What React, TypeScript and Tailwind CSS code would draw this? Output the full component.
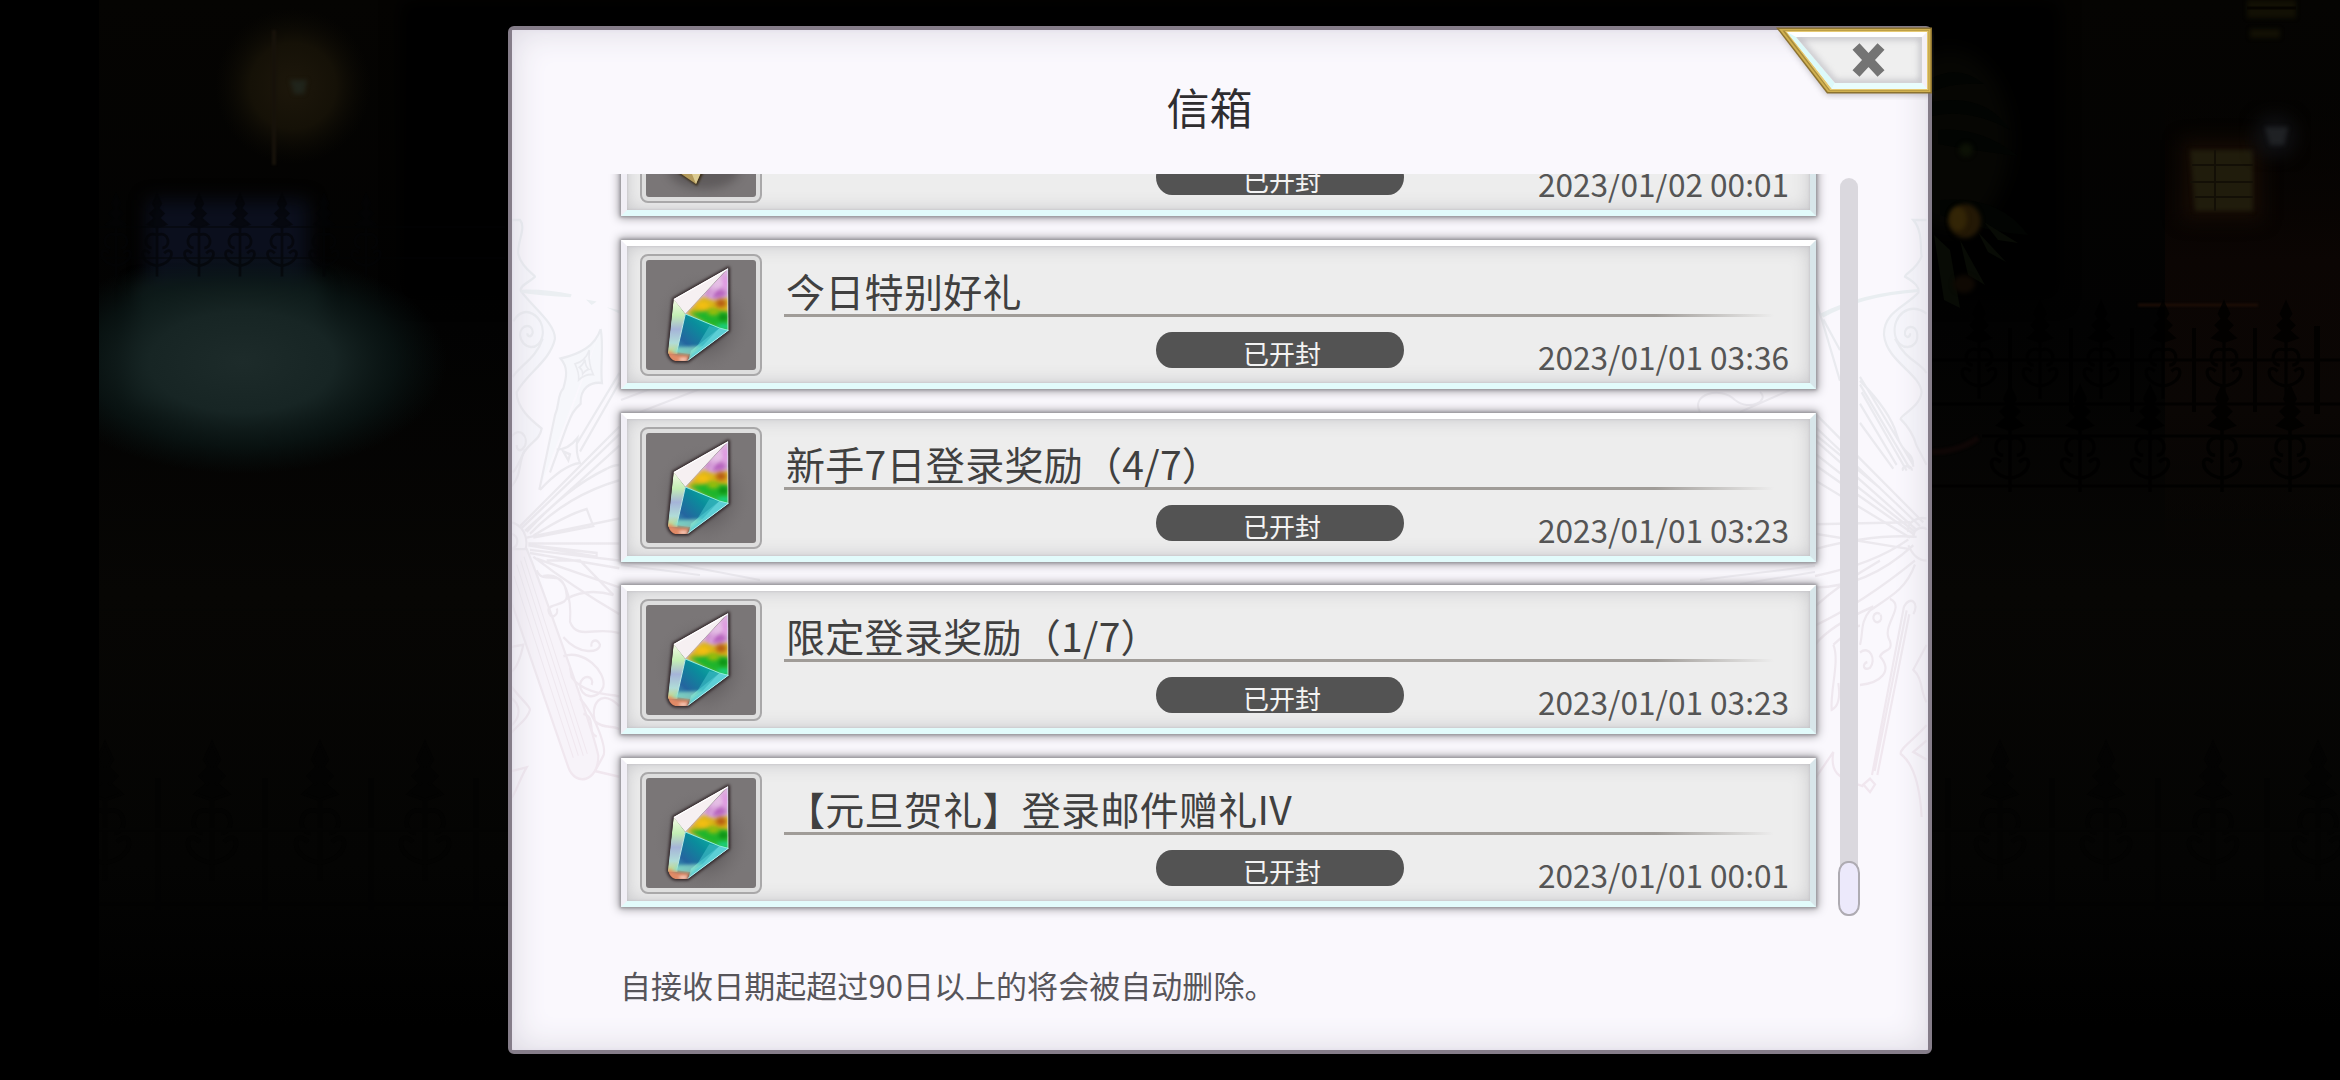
import React from 'react';

interface Mail {
  id: number;
  title: string;
  date: string;
  reward: 'gem' | 'gold';
}

const mails: Mail[] = [
  { id: 1, title: '', date: '2023/01/02 00:01', reward: 'gold' },
  { id: 2, title: '今日特别好礼', date: '2023/01/01 03:36', reward: 'gem' },
  { id: 3, title: '新手7日登录奖励（4/7）', date: '2023/01/01 03:23', reward: 'gem' },
  { id: 4, title: '限定登录奖励（1/7）', date: '2023/01/01 03:23', reward: 'gem' },
  { id: 5, title: '【元旦贺礼】登录邮件赠礼IV', date: '2023/01/01 00:01', reward: 'gem' },
];

function Finial({ x, y, s = 1 }: { x: number; y: number; s?: number }) {
  return (
    <g transform={`translate(${x} ${y}) scale(${s})`}>
      <path d="M0 -38 L5 -27 L2 -22 L8 -16 L3 -11 L11 -4 L0 0 L-11 -4 L-3 -11 L-8 -16 L-2 -22 L-5 -27 Z" />
      <path d="M0 0V54M0 8C14 2 16 22 6 22M0 8C-14 2 -16 22 -6 22M0 42C22 38 18 18 8 28M0 42C-22 38 -18 18 -8 28" fill="none" strokeWidth="3" />
    </g>
  );
}

function Scene() {
  return (
    <svg className="absolute inset-0 h-full w-full" viewBox="0 0 2340 1080" preserveAspectRatio="none">
      <defs>
        <linearGradient id="ground" x1="0" y1="0" x2="0" y2="1">
          <stop offset="0" stopColor="#050402" />
          <stop offset="0.3" stopColor="#020202" />
          <stop offset="0.55" stopColor="#070604" />
          <stop offset="0.8" stopColor="#040403" />
          <stop offset="0.95" stopColor="#000" />
        </linearGradient>
        <radialGradient id="lamp">
          <stop offset="0" stopColor="#1d170b" />
          <stop offset="0.55" stopColor="#151107" />
          <stop offset="1" stopColor="#0c0a04" stopOpacity="0" />
        </radialGradient>
        <radialGradient id="pool">
          <stop offset="0" stopColor="#1d2b2a" />
          <stop offset="0.45" stopColor="#172524" />
          <stop offset="0.75" stopColor="#0b1817" stopOpacity="0.7" />
          <stop offset="1" stopColor="#081413" stopOpacity="0" />
        </radialGradient>
        <linearGradient id="house" x1="0" y1="0" x2="0" y2="1">
          <stop offset="0" stopColor="#040200" stopOpacity="0" />
          <stop offset="0.4" stopColor="#0b0503" />
          <stop offset="0.7" stopColor="#0a0604" />
          <stop offset="1" stopColor="#0a0604" stopOpacity="0" />
        </linearGradient>
        <filter id="soft" colorInterpolationFilters="sRGB" x="-40%" y="-40%" width="180%" height="180%">
          <feGaussianBlur stdDeviation="9" />
        </filter>
        <filter id="soft2" colorInterpolationFilters="sRGB" x="-40%" y="-40%" width="180%" height="180%">
          <feGaussianBlur stdDeviation="2" />
        </filter>
      </defs>
      <rect x="99" width="2241" height="1080" fill="url(#ground)" />
      <rect x="400" width="1660" height="300" fill="#000" filter="url(#soft)" />
      <circle cx="293" cy="86" r="78" fill="url(#lamp)" />
      <path d="M274 30V165" stroke="#17120a" strokeWidth="4" filter="blur(1px)" />
      <path d="M290 80H307L304 94H294Z" fill="#20241b" filter="url(#soft2)" />
      <svg x="99" y="0" width="360" height="600" viewBox="99 0 360 600">
        <path d="M148 200H308V300H148Z" fill="#0b0f1d" filter="url(#soft)" />
        <path d="M136 285H322V400H136Z" fill="#14201f" filter="url(#soft)" />
        <ellipse cx="242" cy="362" rx="205" ry="112" fill="url(#pool)" />
      </svg>
      <g fill="#030406" stroke="#030406" strokeWidth="1.5" opacity="0.6">
        {[116, 157, 199, 240, 282, 324, 366].map((x) => (
          <Finial key={x} x={x} y={228} s={0.9} />
        ))}
        <path d="M99 227H505M99 258H505" />
      </g>

      {/* house and its lit windows */}
      <path d="M2165 60H2340V560H2165Z" fill="url(#house)" />
      <path d="M2182 140H2262V220H2182Z" fill="#150b04" filter="url(#soft)" />
      <path d="M2190 150H2253V211H2195Z" fill="#201c0c" filter="url(#soft2)" />
      <path d="M2215 150V211M2190 182H2253M2192 165H2253M2195 197H2253" stroke="#130f06" strokeWidth="2" />
      <path d="M2247 0H2296V18H2247ZM2250 29H2280V38H2250Z" fill="#121004" filter="url(#soft2)" />
      <path d="M2247 8H2296" stroke="#060400" strokeWidth="3" />
      <circle cx="2275" cy="136" r="20" fill="#101114" filter="url(#soft)" />
      <path d="M2265 127H2288L2284 145H2270Z" fill="#1f2124" filter="url(#soft2)" />
      <path d="M2138 305H2258" stroke="#1d0d06" strokeWidth="3" filter="blur(1px)" />

      {/* fruit tree */}
      <ellipse cx="1950" cy="140" rx="60" ry="90" fill="#060603" filter="url(#soft)" />
      <g fill="#020402">
        <path d="M1932 78Q1960 64 1984 84Q1950 82 1932 92ZM1932 102Q1985 92 2010 130Q1970 108 1932 116Z" />
        <path d="M1938 130Q1980 126 2018 156Q1970 150 1938 144ZM1940 200Q2000 195 2028 235Q1985 232 1940 215Z" />
      </g>
      <g fill="#080b05">
        <path d="M1984 222L2018 243L1998 240ZM1978 232L2006 262L1988 252ZM1934 235L1944 300L1960 308L1950 250ZM1960 240L1985 285L1968 275Z" />
      </g>
      <circle cx="1966" cy="150" r="7" fill="#0c1105" filter="url(#soft2)" />
      <ellipse cx="1965" cy="221" rx="16" ry="17" fill="#231805" filter="url(#soft2)" />
      <ellipse cx="1958" cy="219" rx="9" ry="12" fill="#332506" filter="url(#soft2)" />
      <ellipse cx="1964" cy="284" rx="11" ry="9" fill="#0f0903" filter="url(#soft2)" />
      <path d="M1932 452Q1958 452 1978 438" stroke="#0e0605" strokeWidth="6" fill="none" filter="blur(1px)" />

      {/* wrought iron fences */}
      <g fill="#010101" stroke="#010101" strokeWidth="2" opacity="0.8">
        {[1979, 2040, 2101, 2163, 2224, 2286].map((x) => (
          <Finial key={x} x={x} y={342} s={1.05} />
        ))}
        {[2010, 2071, 2132, 2194, 2255].map((x) => (
          <path key={x} d={`M${x} 328V412`} strokeWidth="4" />
        ))}
        <path d="M2317 326V414" strokeWidth="6" />
        <path d="M1932 360H2340M1932 404H2340" strokeWidth="3" />
        {[2010, 2080, 2150, 2222, 2290].map((x) => (
          <Finial key={x} x={x} y={430} s={1.15} />
        ))}
        <path d="M1982 436H2340M1932 486H2340" strokeWidth="3" />
      </g>
      <g fill="#020202" stroke="#020202" strokeWidth="2" opacity="0.5">
        {[105, 212, 320, 425, 2000, 2106, 2213, 2318].map((x) => (
          <Finial key={x} x={x} y={800} s={1.5} />
        ))}
        {[158, 265, 371, 476, 1948, 2052, 2158, 2267].map((x) => (
          <path key={x} d={`M${x} 778V910`} strokeWidth="6" />
        ))}
        <path d="M99 830H508M1932 830H2340M99 904H508M1932 904H2340" strokeWidth="3" />
      </g>
      <g stroke="#090806" strokeWidth="1" fill="none" opacity="0.6">
        <path d="M99 520H508M99 565H508M99 610H508M99 655H508M99 700H508M99 829H508" />
        <path d="M1932 520H2340M1932 565H2340M1932 610H2340M1932 655H2340M1932 700H2340M1932 829H2340" />
      </g>
      <rect width="99" height="1080" fill="#000" />
    </svg>
  );
}

function Ornaments() {
  return (
    <svg className="pointer-events-none absolute inset-0 h-full w-full" viewBox="512 30 1416 1020" fill="none">
      <defs>
        <linearGradient id="tint" gradientUnits="userSpaceOnUse" x1="0" y1="0" x2="0" y2="1500">
          <stop offset="0" stopColor="#e8ecf0" />
          <stop offset="0.5" stopColor="#ebe9ee" />
          <stop offset="1" stopColor="#f1e7ef" />
        </linearGradient>
      </defs>
      <g transform="translate(500 220) scale(.3333 .3827)" stroke="url(#tint)" strokeWidth="6.5">
        <path d="M35 0H60C80 20 50 60 55 90C65 125 105 145 105 148C85 165 60 170 62 185C100 230 165 270 165 310C150 370 80 400 50 450C50 490 90 520 125 545C120 575 90 580 70 610C55 640 65 670 30 700Z" fill="#f6f6fb" />
        <path d="M62 182Q140 180 215 194L212 202Q130 198 62 190ZM258 208L290 213L275 222ZM320 228L358 236L358 244Z" fill="#ebeff2" stroke="none" />
        <path d="M40 265C70 215 135 250 128 300C120 345 65 340 60 300C62 270 100 270 98 295C94 308 82 305 82 296M128 310C110 360 60 380 38 410" />
        <path d="M35 565C60 540 85 565 75 590C60 610 50 600 50 588M75 600C60 630 50 650 38 660" />
        <path d="M302 285C285 330 240 350 182 362C205 385 200 410 190 440C170 460 180 480 165 510L118 705M302 285C312 330 300 380 306 426C270 422 240 440 242 480C215 500 210 520 200 540L150 660" fill="#f6f7fb" />
        <path d="M268 340Q255 370 225 376Q238 400 236 418Q255 402 280 404Q264 375 268 340ZM255 365Q248 380 238 385Q248 392 248 402Q256 392 266 390Q256 382 255 365Z" strokeWidth="5" />
        <path d="M358 400L230 585M358 425L240 605M170 600Q205 600 232 570Q226 610 240 635Q190 640 120 705M190 605L210 612L205 628Z" />
        <path d="M60 800L358 540M65 805L358 560M75 812L358 590M80 815Q200 700 320 650Q340 640 358 640M90 820Q200 720 358 680M100 825Q200 770 260 755L280 800L100 830" />
        <path d="M80 830L358 780M85 845L358 845M85 850L290 880V870L90 850M90 862L358 890M90 870L358 910M100 880Q220 960 358 1030M140 890L240 890L340 980Q260 960 200 990M110 885L358 960" />
        <path d="M35 790C60 795 85 820 78 855C70 880 50 885 35 880M35 820C55 825 60 850 35 860" />
        <path d="M80 860C100 900 270 1300 295 1400C295 1470 225 1480 205 1430L35 1000V860Z" fill="#f7f3f9" />
        <path d="M50 900L235 1400M62 890L250 1400M72 880L262 1395M42 930L220 1405" strokeWidth="3" />
        <path d="M110 915C130 960 190 900 200 980C205 1010 145 1000 145 1020C150 1050 180 1030 170 1015M130 930C200 920 215 990 210 1050C230 1100 290 1060 358 1080M190 1090C240 1140 300 1130 300 1110C290 1090 270 1100 275 1115" />
        <path d="M190 1140C250 1120 320 1180 310 1220C290 1260 240 1245 240 1215C245 1185 285 1190 275 1215M210 1170L215 1195C250 1240 340 1240 358 1245M358 1270C300 1220 270 1270 285 1310C310 1330 330 1320 358 1330M240 1250C290 1300 320 1380 310 1400L285 1440L358 1455M250 1290C290 1300 260 1340 290 1350" />
        <path d="M35 1115L70 1110C60 1150 50 1170 35 1180M35 1220C60 1250 90 1270 90 1280C80 1310 50 1320 35 1340M35 1250C65 1270 60 1300 35 1320M35 1440L80 1430C60 1460 50 1490 35 1510" />
      </g>
      <g transform="translate(1780 220) scale(.3333 .3827)" stroke="url(#tint)" strokeWidth="6.5">
        <path d="M440 0H400C430 30 420 80 425 95C410 130 375 140 375 148C400 160 420 175 415 190C380 225 310 240 312 300C320 370 420 400 425 450C420 490 360 510 362 520C385 540 400 560 410 590L440 640" fill="#f6f6fb" />
        <path d="M120 245Q240 190 415 180V188Q240 200 130 255Z" fill="#e9eef1" stroke="none" />
        <path d="M440 245C390 210 335 250 345 300C355 345 415 340 412 300C410 270 370 275 375 300C380 310 392 305 390 296M345 310C380 370 420 370 440 400" />
        <path d="M105 200L180 420M130 260L180 340M240 410L400 640M240 430L390 650M245 450L380 655M240 480L350 640M240 420Q330 500 350 560C370 620 400 600 400 645M240 530L340 650" />
        <path d="M105 505L430 790M105 540L420 800M105 575L410 810M105 610L405 815M105 640L400 820M105 680L390 830M105 560L300 700M370 655C360 640 400 640 395 655" />
        <path d="M105 795L390 790M105 820L390 860M105 860Q280 820 410 828M105 930Q280 900 385 835M105 960Q260 960 400 850M105 1010Q180 950 300 890M105 1060Q250 1000 405 890M105 1110Q150 1060 280 1010" />
        <path d="M385 815C380 790 410 775 440 780M400 830C400 800 440 800 440 810M385 850C400 880 420 890 440 890" />
        <path d="M405 900C380 960 340 980 270 1020C240 1050 250 1080 240 1110M330 990C380 1010 300 1060 330 1100C340 1130 310 1120 300 1140C340 1180 300 1210 240 1215M240 1130C270 1110 290 1150 270 1170C250 1180 245 1160 262 1155M300 1030A12 12 0 1 0 301 1031M160 1110C180 1150 150 1230 155 1280C180 1270 180 1240 175 1210M160 1110C200 1080 220 1060 240 1060" />
        <path d="M372 1010L276 1450M388 1030L292 1450M380 1020L284 1440M250 1475L270 1460L285 1475L270 1495ZM105 1460L160 1390C150 1440 170 1460 250 1480M372 1010C390 980 420 1000 400 1030" />
        <path d="M440 1110L400 1175C430 1200 420 1230 440 1260M440 1320C400 1360 360 1380 362 1395C400 1420 420 1480 425 1560M440 1360L400 1390L440 1410" />
      </g>
      <g stroke="#eceaf0" strokeWidth="2">
        <path d="M621 400L650 389M640 412L700 389M1700 412C1690 395 1720 385 1735 400C1750 412 1770 400 1760 392M1740 412L1790 390" />
        <path d="M621 565L700 575M660 561L760 580M1700 580L1815 566M1740 584L1815 572" />
      </g>
    </svg>
  );
}

function GemIcon() {
  return (
    <svg className="h-[110px] w-[110px]" viewBox="20 28 330 330">
      <defs>
        <clipPath id="gemShape">
          <path d="M267 52L103 145L86 305Q92 328 108 331L145 331L268 240Z" />
        </clipPath>
        <clipPath id="gemFacet">
          <path d="M267 52L138 190L240 232L268 240Z" />
        </clipPath>
        <radialGradient id="gemBack">
          <stop offset="0.3" stopColor="#4f4b4d" />
          <stop offset="1" stopColor="#7a7677" stopOpacity="0" />
        </radialGradient>
        <linearGradient id="gemLeft" x1="0" y1="0" x2="0" y2="1">
          <stop offset="0" stopColor="#f6fbe8" />
          <stop offset="0.3" stopColor="#c3eeb4" />
          <stop offset="0.55" stopColor="#a5b4d8" />
          <stop offset="0.8" stopColor="#b0dcd8" />
          <stop offset="1" stopColor="#cfd678" />
        </linearGradient>
        <linearGradient id="gemTeal" x1="1" y1="0" x2="0" y2="1">
          <stop offset="0" stopColor="#10c0a0" />
          <stop offset="0.4" stopColor="#0a8d9c" />
          <stop offset="0.75" stopColor="#24659f" />
          <stop offset="1" stopColor="#48a8b8" />
        </linearGradient>
        <filter id="gemBlur" colorInterpolationFilters="sRGB" x="-60%" y="-60%" width="220%" height="220%">
          <feGaussianBlur stdDeviation="6" />
        </filter>
        <filter id="gemEdge" colorInterpolationFilters="sRGB" x="-30%" y="-60%" width="160%" height="220%">
          <feGaussianBlur stdDeviation="4" />
        </filter>
      </defs>
      <rect x="20" y="28" width="330" height="330" fill="#7a7677" />
      <ellipse cx="190" cy="215" rx="150" ry="160" fill="url(#gemBack)" opacity="0.8" />
      <path d="M267 52L103 145L86 305Q92 328 108 331L145 331L268 240Z" fill="#2c2023" stroke="#2c2023" strokeWidth="9" strokeLinejoin="round" filter="url(#gemEdge)" />
      <g clipPath="url(#gemShape)">
        <path d="M267 52L138 190L240 232L268 240Z" fill="#dcb4dc" />
        <g clipPath="url(#gemFacet)">
          <path d="M138 190L190 138L230 150L270 140V245Z" fill="#d9b416" filter="url(#gemBlur)" />
          <path d="M150 186L215 178L270 185V250L200 220Z" fill="#1fb52c" filter="url(#gemBlur)" />
          <g filter="url(#gemBlur)">
            <ellipse cx="232" cy="128" rx="30" ry="14" fill="#b764be" />
            <ellipse cx="258" cy="95" rx="12" ry="24" fill="#e09be2" />
            <ellipse cx="190" cy="164" rx="20" ry="11" fill="#f4bf12" />
            <ellipse cx="245" cy="158" rx="16" ry="12" fill="#b55a14" />
            <ellipse cx="222" cy="184" rx="18" ry="10" fill="#9fbd08" />
            <ellipse cx="252" cy="200" rx="14" ry="10" fill="#0c8f14" />
            <ellipse cx="255" cy="228" rx="24" ry="8" fill="#1ad48e" />
          </g>
          <path d="M240 70L205 130L215 145L250 100Z" fill="#eecbee" opacity="0.5" filter="url(#gemEdge)" />
        </g>
        <path d="M270 48L100 143L138 190Z" fill="#f6f0f2" />
        <path d="M103 145L138 190L114 310H84Z" fill="url(#gemLeft)" />
        <path d="M138 190L240 232L165 312L112 305Z" fill="url(#gemTeal)" />
        <path d="M240 232L270 238L145 335L155 300Z" fill="#5ccfd6" />
        <path d="M190 285L240 232L210 226L165 300Z" fill="#3bb5c0" opacity="0.7" />
        <path d="M138 190L240 232L270 240" stroke="#8df0dc" strokeWidth="3" fill="none" />
        <path d="M138 190L112 305" stroke="#b9e9e6" strokeWidth="3" />
        <path d="M110 290L190 285L150 318L95 312Z" fill="#8fdfc6" opacity="0.75" filter="url(#gemEdge)" />
        <path d="M84 300L112 310L152 312L140 338H84Z" fill="#e08a66" filter="url(#gemEdge)" />
        <ellipse cx="132" cy="326" rx="14" ry="5" fill="#f7d2c6" filter="url(#gemEdge)" />
        <path d="M267 54L104 146" stroke="#fff" strokeWidth="4" />
        <path d="M266 54V240L145 330" stroke="#d7fbfb" strokeWidth="3" fill="none" opacity="0.8" />
      </g>
    </svg>
  );
}

function GoldIcon() {
  return (
    <svg className="h-[110px] w-[110px]" viewBox="0 0 110 110">
      <rect width="110" height="110" fill="#7a7677" />
      <ellipse cx="58" cy="82" rx="36" ry="20" fill="#4a4647" opacity="0.55" filter="blur(5px)" />
      <path d="M20 78L51 99L62 76Z" fill="#3a2d18" filter="blur(1px)" />
      <path d="M22 78L50 97L59 76Z" fill="#b39a5c" />
      <path d="M44 82L50 97L59 76Z" fill="#dccb92" />
    </svg>
  );
}

function MailCard({ mail }: { mail: Mail }) {
  return (
    <div className="flex h-[149px] w-[1195px] shrink-0 border-6 border-t-white border-r-[#d8e6ea] border-b-[#e2fbfb] border-l-[#f1eff6] bg-[#ededed] pt-[8px] pr-[21px] pl-[13px] shadow-[0_0_3px_1px_#929095,0_0_9px_2px_#9e9ca1,inset_0_0_3px_#bdbcc0,inset_0_0_18px_#c6c6c9]">
      <div className="flex h-[122px] w-[122px] shrink-0 items-center justify-center rounded-[8px] border-2 border-[#a9a8a9] bg-[#dedede]">
        <div className="overflow-hidden rounded-[3px]">
          {mail.reward === 'gem' ? <GemIcon /> : <GoldIcon />}
        </div>
      </div>
      <div className="ml-[22px] flex flex-1 flex-col">
        <div className="h-[60px] pt-[17px] pl-[2px] text-[39px] leading-[39px] tracking-[0.3px] whitespace-nowrap text-[#404040]">{mail.title}</div>
        <div className="h-[3px] w-[990px] bg-linear-to-r from-[#a09c98] from-88% to-[#a09c98]/0" />
        <div className="mt-[15px] flex">
          <div className="ml-[372px] h-[36px] w-[248px] rounded-[16px/18px] bg-[#535353] pt-[8px] pl-[4px] text-center text-[26px] leading-[26px] text-[#f4f4f4]">
            已开封
          </div>
          <div className="mt-[9px] ml-auto text-[31.6px] leading-[31px] whitespace-nowrap text-[#555]">{mail.date}</div>
        </div>
      </div>
    </div>
  );
}

function CloseButton() {
  return (
    <button aria-label="close" className="absolute -top-[6px] -right-[6px] h-[76px] w-[164px]">
      <svg className="h-full w-full" viewBox="1770 24 164 76" fill="none">
        <defs>
          <filter id="panelEdge" colorInterpolationFilters="sRGB"><feGaussianBlur stdDeviation="3" /></filter>
          <clipPath id="panelClip"><path d="M1796 37H1922V83H1835Z" /></clipPath>
        </defs>
        <path d="M1780 32H1931V95H1827Z" fill="#66606a" opacity="0.4" filter="url(#panelEdge)" />
        <path d="M1776 27.5H1932V93.5H1827Z" fill="#8c7230" />
        <path d="M1779 29H1930.5V92H1827.8Z" fill="#d0b050" />
        <path d="M1782.5 30.5H1929V90.5H1829Z" fill="#a88c3c" />
        <path d="M1785 31H1928.5V90H1830Z" fill="#e6c972" />
        <path d="M1787 32H1927V89H1832Z" fill="#fff" />
        <path d="M1787 32L1832 89L1835 83L1796 37Z" fill="#dcfafa" />
        <path d="M1832 89H1927L1922 83H1835Z" fill="#e9fdfd" />
        <path d="M1927 32V89L1922 83V37Z" fill="#f4f0f6" />
        <path d="M1796 37H1922V83H1835Z" fill="#efefef" />
        <path d="M1796 37H1922V83H1835Z" stroke="#bdbcc2" strokeWidth="5" filter="url(#panelEdge)" clipPath="url(#panelClip)" />
        <path d="M1856 46.5L1881 73.5M1881 46.5L1856 73.5" stroke="#747474" strokeWidth="9.5" />
      </svg>
    </button>
  );
}

export default function App() {
  return (
    <div className="relative flex h-[1080px] w-[2340px] overflow-hidden bg-black font-['Noto_Sans_CJK_SC',sans-serif]">
      <Scene />
      <div className="relative mt-[26px] ml-[508px] flex h-[1028px] w-[1424px] flex-col rounded-[6px] border-4 border-[#857d89] bg-[#faf8fd]">
        <Ornaments />
        <div className="pointer-events-none absolute inset-0 shadow-[inset_0_0_4px_#e3deea,inset_0_0_34px_#dad7e0]" />
        <h1 className="relative h-[144px] pr-[21px] pt-[55px] text-center text-[43px] leading-[43px] text-[#2f2d30]">信箱</h1>

        <div className="relative flex h-[750px]">
          <div className="flex h-[750px] w-[1321px] flex-col justify-end gap-[23.7px] overflow-hidden pb-[17px] pl-[109px]">
            {mails.map((mail) => (
              <MailCard key={mail.id} mail={mail} />
            ))}
          </div>
          <div className="mt-[4px] ml-[5px] flex h-[738px] w-[22px] flex-col items-center">
            <div className="w-[18px] flex-1 rounded-t-full bg-[#dad8de]" />
            <div className="-mt-[8px] h-[55px] w-[22px] rounded-[10px/12px] border-2 border-[#aeabb2] bg-[#ece9fb]" />
          </div>
        </div>

        <p className="relative mt-[45px] pl-[108px] text-[31px] leading-[31px] tracking-[0.05px] text-[#57555a]">自接收日期起超过90日以上的将会被自动删除。</p>
        <CloseButton />
      </div>
    </div>
  );
}
